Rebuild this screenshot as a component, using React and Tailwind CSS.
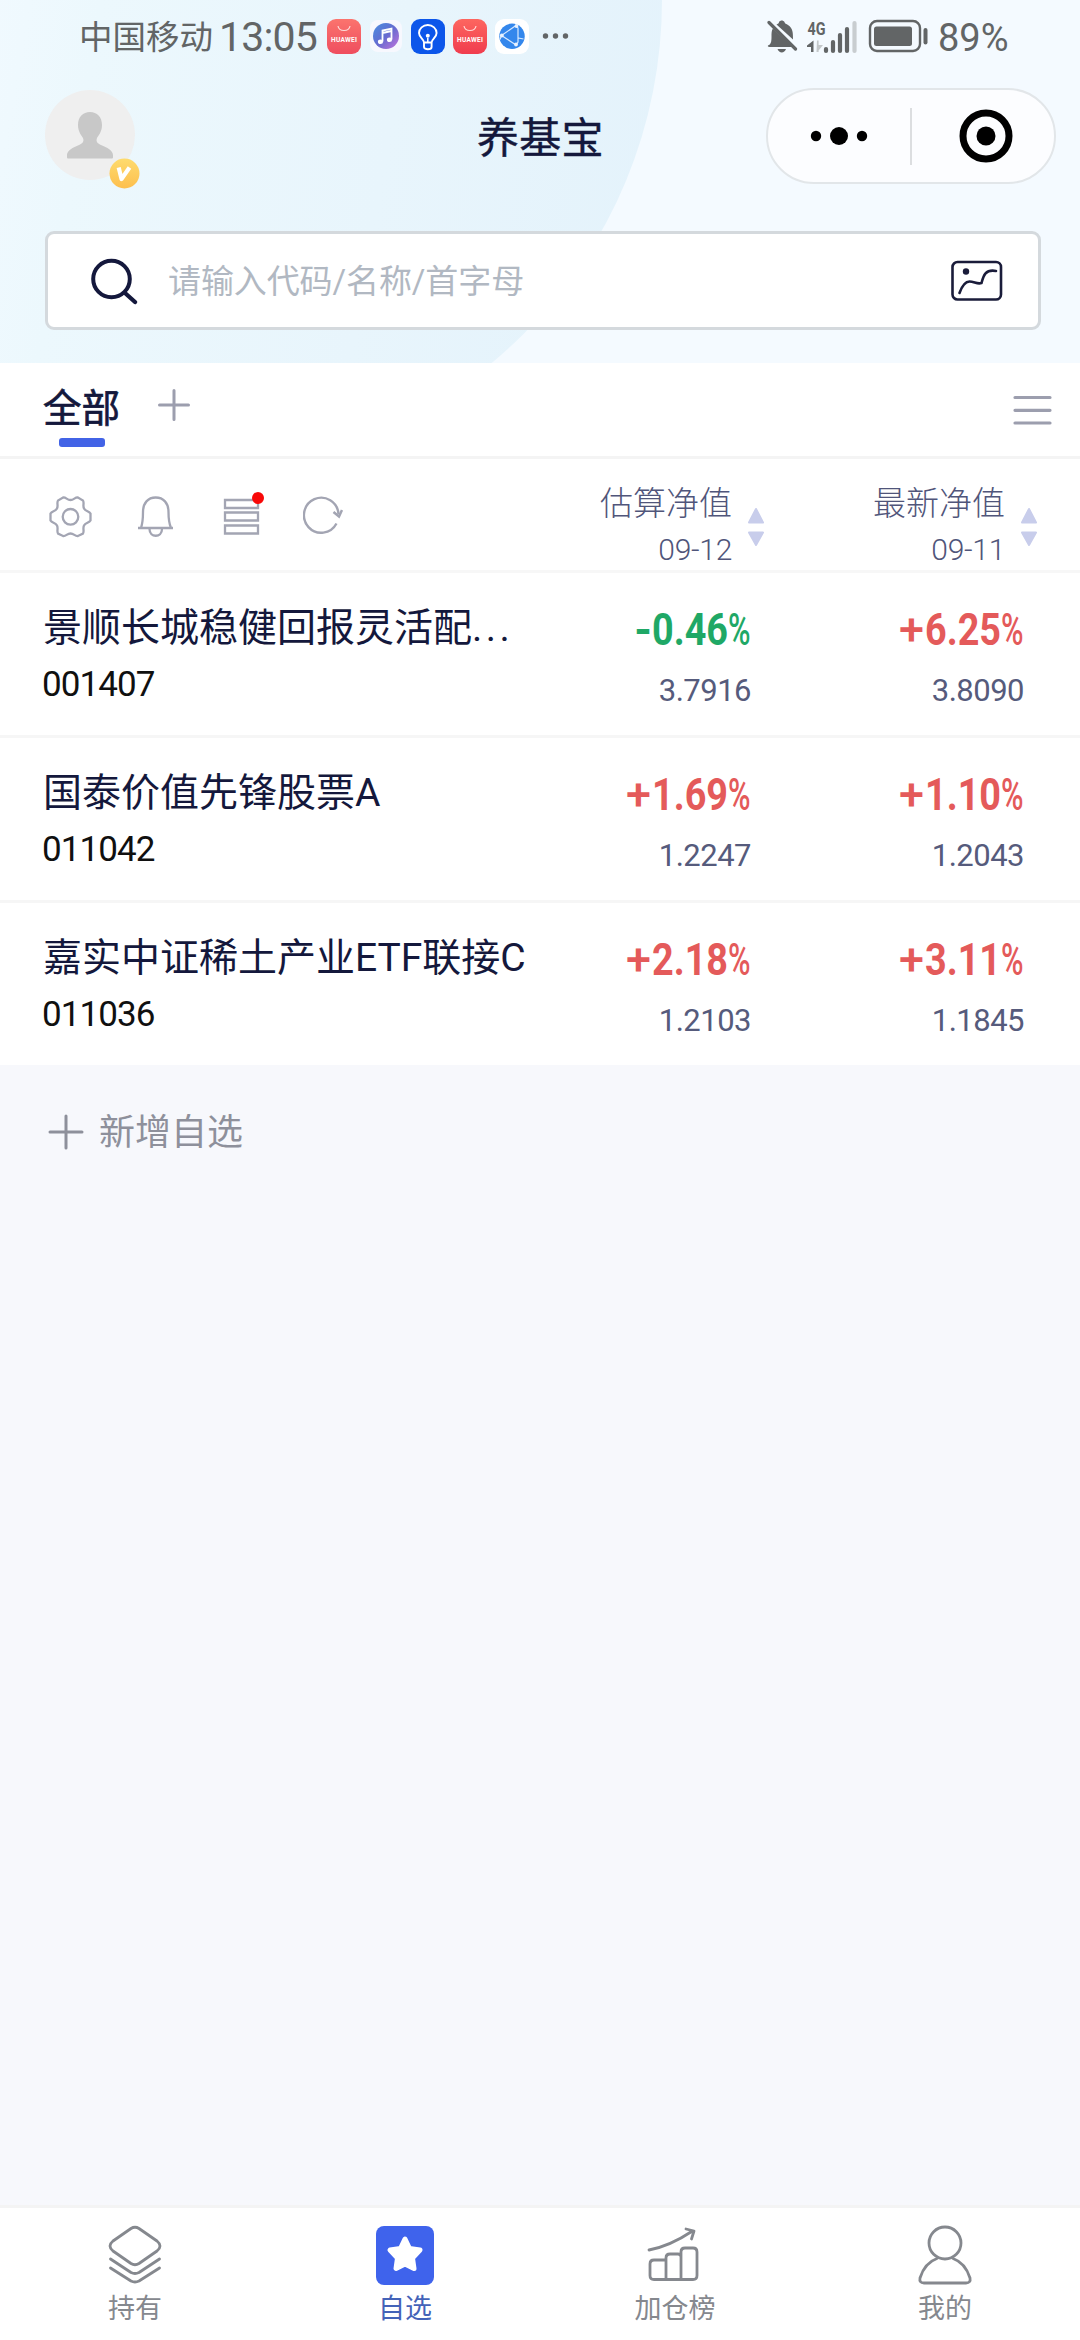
import React from 'react';

const funds = [
  { name: '景顺长城稳健回报灵活配', more: true, code: '001407', est: ['-', '0.46', '3.7916'], last: ['+', '6.25', '3.8090'] },
  { name: '国泰价值先锋股票A', code: '011042', est: ['+', '1.69', '1.2247'], last: ['+', '1.10', '1.2043'] },
  { name: '嘉实中证稀土产业ETF联接C', code: '011036', est: ['+', '2.18', '1.2103'], last: ['+', '3.11', '1.1845'] },
];

const HuaweiIcon = ({ faded }) => (
  <svg className={faded ? 'w-[34px] h-[35px] opacity-90' : 'w-[34px] h-[35px]'} viewBox="0 0 34 35">
    <defs>
      <linearGradient id="hw" x1="0" y1="0" x2="0" y2="1">
        <stop offset="0" stopColor="#fd665f" />
        <stop offset="1" stopColor="#f03c4e" />
      </linearGradient>
    </defs>
    <rect width="34" height="35" rx="9" fill="url(#hw)" />
    <path d="M11 7c1 6 11 6 12 0" fill="none" stroke="#ffd9d6" strokeWidth="1.2" />
    <text x="17" y="22.5" textAnchor="middle" fontSize="6.6" fontWeight="700" fill="#fff" fontFamily="Roboto" textLength="26">HUAWEI</text>
  </svg>
);

const StatusBar = () => (
  <div className="flex h-[72px] items-center pl-[79px] text-[#626566]">
    <span className="mt-[4px] w-[140px] text-[33.5px]">中国移动</span>
    <span className="mt-[3px] w-[108px] text-[41px] tracking-[-0.8px] leading-none">13:05</span>
    <div className="flex items-center">
      <HuaweiIcon faded />
      <svg className="ml-[9px] w-[32px] h-[32px]" viewBox="0 0 32 32">
        <defs>
          <linearGradient id="mu" x1="0" y1="0" x2="1" y2="1">
            <stop offset="0" stopColor="#4a8fe0" />
            <stop offset="0.5" stopColor="#666bd0" />
            <stop offset="1" stopColor="#c474dc" />
          </linearGradient>
        </defs>
        <rect width="32" height="32" rx="8" fill="#f7f8fe" />
        <circle cx="16" cy="16" r="13" fill="url(#mu)" />
        <path d="M12.5 21.5v-11l9-2v11M12.5 13l9-2" fill="none" stroke="#fff" strokeWidth="1.8" />
        <ellipse cx="10.5" cy="21.8" rx="2.6" ry="2.3" fill="#fff" />
        <ellipse cx="19.5" cy="19.8" rx="2.6" ry="2.3" fill="#fff" />
      </svg>
      <svg className="ml-[9px] w-[34px] h-[35px]" viewBox="0 0 34 35">
        <rect width="34" height="35" rx="9" fill="#0c56ea" />
        <path d="M13 23.500c0-3-5-5-5-9.500a8.800 8 0 0 1 17.600 0c0 4.500-5 6.500-5 9.500M13 23.500h7.600v4.500c0 3-7.600 3-7.600 0z" fill="none" stroke="#fff" strokeWidth="1.9" />
        <path d="M16.800 23v-4" stroke="#fff" strokeWidth="1.500" />
        <circle cx="16.800" cy="16.800" r="2" fill="#fff" />
      </svg>
      <span className="ml-[8px]"><HuaweiIcon /></span>
      <svg className="ml-[8px] w-[34px] h-[35px]" viewBox="0 0 34 35">
        <rect width="34" height="35" rx="9" fill="#fff" />
        <circle cx="17" cy="17.200" r="12.700" fill="#3487ec" />
        <path d="M21 6.500 6.500 16.500 21 26M21 6.500l2 2.500v14L21 26M23.500 19l5 1M6.500 16.500l-1.500 4" fill="none" stroke="#d7e9ff" strokeWidth="1.200" />
        <g fill="#e8f2ff">
          <circle cx="6.800" cy="16.500" r="1.900" />
          <circle cx="21.500" cy="7" r="1.900" />
          <circle cx="21" cy="25.500" r="1.900" />
        </g>
      </svg>
      <svg className="ml-[13px] w-[28px] h-[8px]" viewBox="0 0 28 8" fill="#626566">
        <circle cx="3.500" cy="4" r="2.700" />
        <circle cx="13.500" cy="4" r="2.700" />
        <circle cx="23.500" cy="4" r="2.700" />
      </svg>
    </div>
    <svg className="ml-[197px] w-[31px] h-[33px]" viewBox="0 0 31 33" fill="#626566">
      <path d="M1 25.500c3-1 3.500-4 3.500-8.500 0-4 0-6.500 1.500-8.500L25 27H2.500c-1.500 0-2-1-1.500-1.500z" />
      <path d="M9.500 4.500C11 3.500 12 3.500 12 2c1.500-2 4-2 5.500 0 0 1.500 2 2 3.500 3 5 3.500 5 7.500 5 14.500z" />
      <path d="M2 2.500 28.500 29" stroke="#626566" strokeWidth="3.200" strokeLinecap="round" />
      <path d="M10.500 29h8.500c-1.500 4.500-7 4.500-8.500 0z" />
    </svg>
    <svg className="ml-[9px] w-[54px] h-[34px] overflow-visible" viewBox="0 0 54 34" fill="#626566">
      <text x="0.500" y="15.500" fontSize="19" fontWeight="700" fontFamily="Roboto" textLength="18" lengthAdjust="spacingAndGlyphs">4G</text>
      <path d="M6.500 21.500V33H4v-5H0v-1.500z" />
      <path d="M11 21.500h1.600v4.500h4.400l-4.400 5.500v1.500H10.500z" fill="#c4c8ca" transform="translate(-1)" />
      <path d="M19 30v2M26 23v9M33 16v16M40 10v22" stroke="#626566" strokeWidth="4.200" strokeLinecap="round" />
      <path d="M47.500 4v28" stroke="#c8cdd0" strokeWidth="4.200" strokeLinecap="round" />
    </svg>
    <svg className="ml-[7px] w-[61px] h-[34px]" viewBox="0 0 61 34">
      <rect x="2" y="2" width="50" height="30" rx="7" fill="none" stroke="#626566" strokeWidth="2.400" />
      <rect x="6" y="7.500" width="38" height="19.500" rx="2.500" fill="#626566" />
      <rect x="55.500" y="9" width="4" height="16.500" rx="2" fill="#626566" />
    </svg>
    <span className="mt-[4px] ml-[9px] text-[38px] leading-none">89%</span>
  </div>
);

const TitleBar = () => (
  <div className="flex h-[126px] items-center justify-between pl-[45px] pr-[24px]">
    <div className="relative h-[90px] w-[90px] rounded-full bg-[#efefef]">
      <svg className="h-[90px] w-[90px]" viewBox="0 0 90 90" fill="#c8c8c8">
        <path d="M45 22c7 0 12 5 12 13 0 6-3 10-5 13-1.500 4 1 5.500 4 7 6 2.500 12 5.500 12 10v2.500q0 1-1 1H23q-1 0-1-1V65c0-4.500 6-7.500 12-10 3-1.500 5.500-3 4-7-2-3-5-7-5-13 0-8 5-13 12-13z" />
      </svg>
      <svg className="absolute left-[64px] top-[68px] h-[31px] w-[31px]" viewBox="0 0 31 31">
        <defs>
          <linearGradient id="vip" x1="0" y1="0" x2="0" y2="1">
            <stop offset="0" stopColor="#fedb6e" />
            <stop offset="1" stopColor="#fdbf4e" />
          </linearGradient>
        </defs>
        <circle cx="15.500" cy="15.500" r="15" fill="url(#vip)" />
        <path d="M9.700 9.500 12.500 21 20.500 9.500" fill="none" stroke="#fff" strokeWidth="4.200" strokeLinejoin="round" />
      </svg>
    </div>
    <h1 className="mt-[6px] ml-[342px] text-[42px] tracking-[0.200px] text-[#14183c] [-webkit-text-stroke:0.4px_#14183c]">养基宝</h1>
    <div className="mt-[2px] ml-auto flex h-[96px] w-[290px] items-center rounded-full border-2 border-[#e2e6e9] bg-[#fcfdff]">
      <svg className="ml-[42px] h-[20px] w-[60px]" viewBox="0 0 60 20">
        <circle cx="6" cy="10" r="5.200" />
        <circle cx="29" cy="10" r="9" />
        <circle cx="52" cy="10" r="5.200" />
      </svg>
      <div className="ml-[40px] h-[57px] w-[2px] bg-[#dcdee0]" />
      <svg className="ml-[47px] h-[54px] w-[54px]" viewBox="0 0 54 54">
        <circle cx="27" cy="27" r="23" fill="none" stroke="#000" strokeWidth="7" />
        <circle cx="27" cy="27" r="9.500" />
      </svg>
    </div>
  </div>
);

const SearchBar = () => (
  <div className="mr-[39px] mt-[33px] ml-[45px] flex h-[99px] items-center rounded-[9px] border-[3px] border-[#d4d9dd] bg-white pl-[43px] pr-[35px]">
    <svg className="h-[48px] w-[48px]" viewBox="0 0 48 48" fill="none" stroke="#14183c" strokeWidth="4" strokeLinecap="round">
      <circle cx="20.500" cy="22" r="18.300" />
      <path d="M34 36 44 45" strokeWidth="4.300" />
    </svg>
    <span className="mt-[3px] ml-[29px] flex-1 text-[33px] tracking-[-0.100px] text-[#b1b8c2]">请输入代码/名称/首字母</span>
    <svg className="h-[42px] w-[52px]" viewBox="0 0 52 42" fill="none" stroke="#1a1c3a" strokeWidth="2.600" strokeLinecap="round">
      <rect x="1.500" y="2" width="48.500" height="37.500" rx="5" />
      <path d="M8.500 33C11 26 14 21.500 18.500 21.500c4.500 0 8 3 12 1.500C32.500 15.500 34.500 9 45 11" />
      <circle cx="15" cy="11.500" r="3.200" fill="#1a1c3a" stroke="none" />
    </svg>
  </div>
);

const Tabs = () => (
  <div className="flex h-[96px] items-start border-b-[3px] border-[#f4f4f4] bg-white pl-[43px] pr-[28px]">
    <div className="flex flex-col items-center">
      <span className="mt-[18px] text-[38.500px] leading-[56px] text-[#14183c] [-webkit-text-stroke:0.7px_#14183c]">全部</span>
      <span className="mt-[1px] h-[9px] w-[46px] rounded-[3px] bg-[#4263e6]" />
    </div>
    <svg className="ml-[38px] mt-[26px] h-[32px] w-[32px]" viewBox="0 0 32 32" stroke="#9c9eae" strokeWidth="3" strokeLinecap="round">
      <path d="M16 1.500v29M1.500 16h29" />
    </svg>
    <svg className="ml-auto mt-[32px] h-[32px] w-[39px]" viewBox="0 0 39 32" stroke="#9c9eae" strokeWidth="3.200" strokeLinecap="round">
      <path d="M2 2.500h35M2 15.300h35M2 28h35" />
    </svg>
  </div>
);

const SortHead = ({ title, date }) => (
  <div className="flex w-[273px] shrink-0 justify-end">
    <div className="flex flex-col items-end font-light text-[#50557a]">
      <span className="mt-[24px] text-[33px] leading-[42px]">{title}</span>
      <span className="mt-[9px] text-[30px] leading-[32px] tracking-[-0.300px]">{date}</span>
    </div>
    <svg className="ml-[15px] mt-[48px] h-[40px] w-[18px]" viewBox="0 0 18 40" fill="#c8cdeb" stroke="#c8cdeb" strokeWidth="2" strokeLinejoin="round">
      <path d="M9 2 16 15.500H2zM9 38 16 25.500H2z" />
    </svg>
  </div>
);

const Toolbar = () => (
  <div className="flex h-[114px] border-b-[3px] border-[#f7f7f7] bg-white pl-[48px] pr-[42px]">
    <div className="flex flex-1 pt-[36px]">
      <svg className="h-[44px] w-[45px]" viewBox="0 0 45 44" fill="none" stroke="#a3a5b3" strokeWidth="2.300">
        <path d="M15 2.500C18 2 19 5 22.500 5S27 2 30 2.500L35 5.500C36.500 8 34.500 10.500 36 13.500S41 16 42.500 18.500V25.500C41 28 37.500 27.500 36 30.500S36.500 36 35 38.500L30 41C27 41.500 26 38.500 22.500 38.500S18 41.500 15 41L10 38.500C8.500 36 10.500 33.500 9 30.500S4 28 2.500 25.500V18.500C4 16 7.500 16.500 9 13.500S8.500 8 10 5.500z" />
        <circle cx="22.500" cy="21.800" r="7.800" />
      </svg>
      <svg className="ml-[44px] h-[44px] w-[38px]" viewBox="0 0 38 44" fill="none" stroke="#a3a5b3" strokeWidth="2.300">
        <path d="M1 33h35M4 33c2-6 2-10 2-16C6 8 11 2.500 18.700 2.500S31.500 8 31.500 17c0 6 0 10 2.500 16M12.500 34c0 9 12.500 9 12.500 0" />
      </svg>
      <div className="relative ml-[47px] h-[44px] w-[38px]">
        <svg className="h-[44px] w-[38px]" viewBox="0 0 38 44" fill="none" stroke="#a3a5b3" strokeWidth="2.300">
          <path d="M3 5h33v8H3zM3 17.500h33v8H3zM3 30.500h33v8H3z" />
        </svg>
        <span className="absolute left-[30px] top-[-3px] h-[12px] w-[12px] rounded-full bg-[#f80808]" />
      </div>
      <svg className="ml-[43px] h-[44px] w-[40px]" viewBox="0 0 40 44" fill="none" stroke="#a3a5b3" strokeWidth="2.400">
        <path d="M33.500 28.500A17.300 17.500 0 1 1 35.500 19" />
        <path d="M30.500 17 36 21.500 39 15" strokeWidth="2.500" />
      </svg>
    </div>
    <SortHead title="估算净值" date="09-12" />
    <SortHead title="最新净值" date="09-11" />
  </div>
);

const Rate = ({ data }) => {
  const [sign, rate, value] = data;
  return (
    <div className="flex w-[273px] shrink-0 flex-col items-end">
      <div className={`mt-[31px] mr-[3px] flex text-[45px] leading-[52px] ${sign === '-' ? 'text-[#1fa866]' : 'text-[#e45a5a]'}`}>
        <span className={sign === '-' ? 'font-bold' : 'mr-[1px] font-medium'}>{sign}</span>
        <span className="w-[76px] origin-left scale-x-[0.84] font-bold">{rate}</span>
        <span className="w-[20px] origin-left scale-x-[0.680] font-medium">%</span>
      </div>
      <span className="mt-[17px] text-[31px] leading-[36px] tracking-[-0.500px] text-[#565b7c]">{value}</span>
    </div>
  );
};

const FundRow = ({ fund, first }) => (
  <div className={first ? 'flex h-[162px] bg-white pl-[43px] pr-[56px]' : 'flex h-[165px] border-t-[3px] border-[#f6f6f6] bg-white pl-[43px] pr-[56px]'}>
    <div className="flex min-w-0 flex-1 flex-col whitespace-nowrap">
      <span className="mt-[29px] text-[39px] leading-[52px] text-[#14183c]">
        {fund.name}
        {fund.more && <span className="tracking-[3.500px]">...</span>}
      </span>
      <span className="-ml-[1px] mt-[11px] text-[35px] leading-[40px] tracking-[-0.900px] text-[#101010]">{fund.code}</span>
    </div>
    <Rate data={fund.est} />
    <Rate data={fund.last} />
  </div>
);

const TabItem = ({ label, active, children }) => (
  <div className={`flex flex-1 flex-col items-center pt-[17px] text-[27px] ${active ? 'text-[#4463b8]' : 'text-[#85888e]'}`}>
    <svg className="h-[60px] w-[60px]" viewBox="0 0 60 60" fill="none" stroke="#85888e" strokeWidth="2.800" strokeLinecap="round" strokeLinejoin="round">
      {children}
    </svg>
    <span className="mt-[6px] leading-[36px]">{label}</span>
  </div>
);

const TabBar = () => (
  <div className="flex h-[135px] border-t-[3px] border-[#f4f4f4] bg-white">
    <TabItem label="持有">
      <path d="M26 3.500q4-2.500 8 0l18 12.500q6 5 0 10L34 38.500q-4 2.500-8 0L8 26q-6-5 0-10zM5.500 34 26 47.500q4 2 8 0L54.500 34M5.500 43 26 56q4 2 8 0L54.500 43" />
    </TabItem>
    <TabItem label="自选" active>
      <rect x="1" y="1" width="58" height="59" rx="8" fill="#3f63ec" stroke="none" />
      <path d="M30 14l4.500 9.500 10.500 1.500-7.500 8 1.500 10.500-9-4.500-9 4.500 1.500-10.500-7.500-8 10.500-1.500z" fill="#fff" stroke="#fff" strokeWidth="5" />
    </TabItem>
    <TabItem label="加仓榜">
      <path d="M4 25C20 22 34 15 47.500 6M41 4l8 2-2.500 8" />
      <path d="M21 54.500H9q-4 0-4-4V39q0-4 4-4h12M21 54.500V33q0-4 4-4h8q3 0 3 3v22.500zM36 54.500V27q0-4 4-4h8q4 0 4 4v23.500q0 4-4 4z" />
    </TabItem>
    <TabItem label="我的">
      <circle cx="30" cy="18" r="16" />
      <path d="M22 33.500C12 37 7.500 45 5 53q-1 5 4 5h42q5 0 4-5C52.500 45 48 37 38 33.500" />
    </TabItem>
  </div>
);

const App = () => (
  <div className="flex h-[2340px] w-[1080px] flex-col overflow-hidden bg-[#f7f8fc] font-['Roboto','Noto_Sans_CJK_SC',sans-serif]">
    <div className="relative h-[363px] overflow-hidden bg-[#f4faff]">
      <div className="absolute left-[-282px] top-[-472px] h-[944px] w-[944px] rounded-full bg-[linear-gradient(100deg,#f2faff_29%,#ecf8fd_42%,#e8f5fc_70%,#e3f2fb_100%)]" />
      <div className="relative">
        <StatusBar />
        <TitleBar />
        <SearchBar />
      </div>
    </div>
    <Tabs />
    <Toolbar />
    {funds.map((fund, i) => (
      <FundRow key={fund.code} fund={fund} first={i === 0} />
    ))}
    <div className="flex items-center pl-[48px] pt-[42px] text-[36px] leading-[48px] text-[#8e909b]">
      <svg className="h-[36px] w-[36px]" viewBox="0 0 36 36" stroke="#8e909b" strokeWidth="3" strokeLinecap="round">
        <path d="M18 2v32M2 18h32" />
      </svg>
      <span className="mt-[2px] ml-[15px]">新增自选</span>
    </div>
    <div className="flex-1" />
    <TabBar />
  </div>
);

export default App;
